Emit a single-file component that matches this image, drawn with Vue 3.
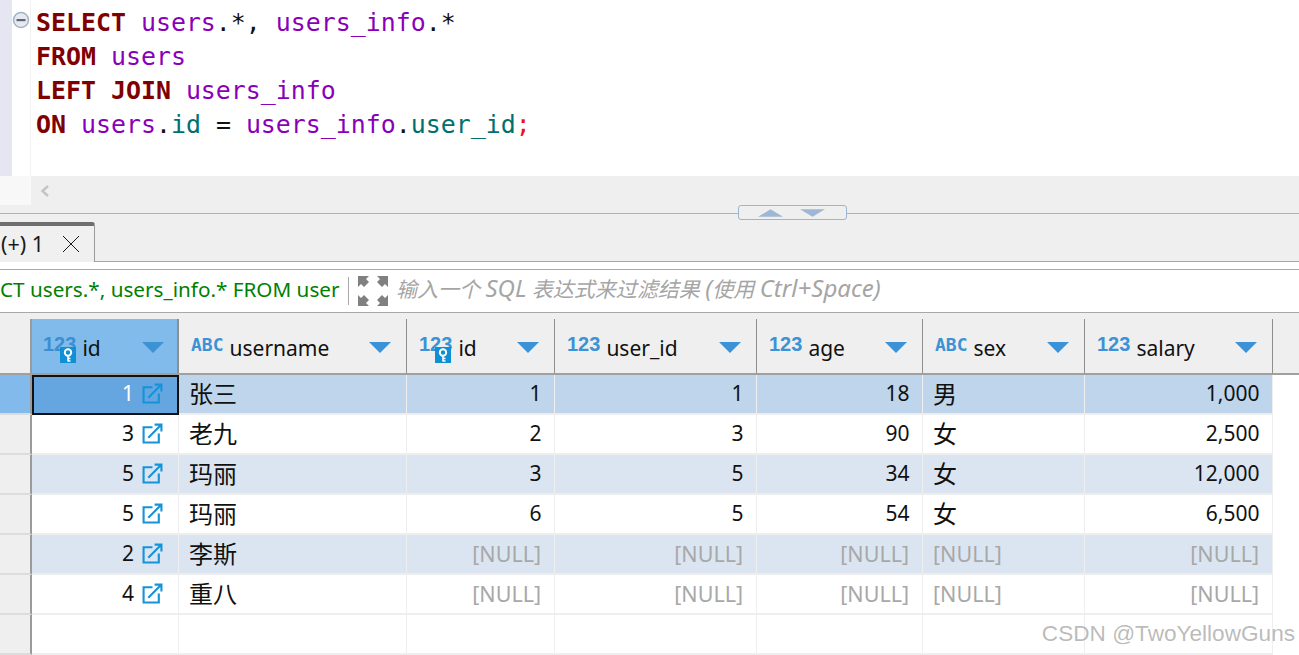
<script setup>
const columns = [
  { name: 'id', type: '123', key: true, width: 147, active: true },
  { name: 'username', type: 'ABC', width: 228 },
  { name: 'id', type: '123', key: true, width: 148 },
  { name: 'user_id', type: '123', width: 202 },
  { name: 'age', type: '123', width: 166 },
  { name: 'sex', type: 'ABC', width: 162 },
  { name: 'salary', type: '123', width: 188 }
]
const N = '[NULL]'
const rows = [
  ['1', '张三', '1', '1', '18', '男', '1,000'],
  ['3', '老九', '2', '3', '90', '女', '2,500'],
  ['5', '玛丽', '3', '5', '34', '女', '12,000'],
  ['5', '玛丽', '6', '5', '54', '女', '6,500'],
  ['2', '李斯', N, N, N, N, N],
  ['4', '重八', N, N, N, N, N]
]
const isText = (i) => columns[i].type === 'ABC'
const rowClass = (r) => (r === 0 ? 'sel' : r % 2 === 0 ? 'alt' : '')
</script>

<template>
  <div class="page">
    <section class="editor">
      <div class="gutter"></div>
      <div class="fold">
        <svg class="fold-icon" width="18" height="18" viewBox="0 0 18 18">
          <circle cx="9" cy="9" r="7.5" fill="#e6eaf0" stroke="#a3b3c6" stroke-width="1.5" />
          <rect x="4.5" y="8" width="9" height="2.2" fill="#5f6670" />
        </svg>
      </div>
      <pre class="code"><span class="kw">SELECT</span> <span class="tb">users</span>.*, <span class="tb">users_info</span>.*
<span class="kw">FROM</span> <span class="tb">users</span>
<span class="kw">LEFT JOIN</span> <span class="tb">users_info</span>
<span class="kw">ON</span> <span class="tb">users</span>.<span class="cl">id</span> = <span class="tb">users_info</span>.<span class="cl">user_id</span><span class="sc">;</span></pre>
    </section>

    <div class="hscroll">
      <div class="hscroll-corner"></div>
      <svg class="chev" width="10" height="12" viewBox="0 0 10 12"><path d="M8 1 2.5 6 8 11" fill="none" stroke="#c4c4c4" stroke-width="2.4" /></svg>
    </div>

    <div class="sash">
      <div class="sash-handle">
        <svg width="25" height="8" viewBox="0 0 26 8"><path d="M0 8 13 0 26 8Z" fill="#9db7d4" /></svg>
        <svg width="25" height="8" viewBox="0 0 26 8"><path d="M0 0H26L13 8Z" fill="#9db7d4" /></svg>
      </div>
    </div>

    <div class="tabbar">
      <div class="tab">
        <span class="tab-label">(+) 1</span>
        <svg width="18" height="18" viewBox="0 0 18 18"><path d="M1 1 17 17M17 1 1 17" stroke="#1a1a1a" stroke-width="1" fill="none" /></svg>
      </div>
    </div>

    <div class="filter">
      <div class="query"><span class="query-text">CT users.*, users_info.* FROM users</span></div>
      <div class="divider"></div>
      <svg class="expand" width="30" height="30" viewBox="0 0 30 30" fill="#808080">
        <path d="M0 0H11L8 3 11 6 6 11 3 8 0 11Z" />
        <path d="M30 0H19L22 3 19 6 24 11 27 8 30 11Z" />
        <path d="M0 30H11L8 27 11 24 6 19 3 22 0 19Z" />
        <path d="M30 30H19L22 27 19 24 24 19 27 22 30 19Z" />
      </svg>
      <span class="hint">输入一个 <span class="latin">SQL</span> 表达式来过滤结果 <span class="latin">(</span>使用 <span class="latin">Ctrl+Space)</span></span>
    </div>

    <div class="gap"></div>

    <div class="grid">
      <div class="head-row">
        <div class="row-head"></div>
        <div
          v-for="(c, i) in columns"
          :key="i"
          class="hcell"
          :class="{ active: c.active }"
          :style="{ width: c.width + 'px' }"
        >
          <span class="type" :class="{ abc: c.type === 'ABC' }">{{ c.type }}</span>
          <svg v-if="c.key" class="key" width="16" height="16" viewBox="0 0 16 16">
            <rect width="16" height="16" fill="#0f8fd6" />
            <circle cx="8" cy="5.500" r="3.200" fill="none" stroke="#fff" stroke-width="2" />
            <path d="M8 8.500V14.500M8 11.500H10.500M8 14H10.500" stroke="#fff" stroke-width="1.600" fill="none" />
          </svg>
          <span class="hname">{{ c.name }}</span>
          <svg class="sort" width="22" height="11" viewBox="0 0 22 11"><path d="M0 0H22L11 11Z" :fill="c.active ? '#3c92d2' : '#3c92d6'" /></svg>
        </div>
      </div>

      <div v-for="(row, r) in rows" :key="r" class="row" :class="rowClass(r)">
        <div class="row-head"></div>
        <div
          v-for="(v, i) in row"
          :key="i"
          class="cell"
          :class="{ left: isText(i), null: v === N, current: r === 0 && i === 0, first: i === 0 }"
          :style="{ width: columns[i].width + 'px' }"
        >
          <span>{{ v }}</span>
          <svg v-if="i === 0" class="link" width="21" height="21" viewBox="0 0 20 20" fill="none" stroke="#1593d8" stroke-width="2">
            <path d="M10 4H1.500V18.500H16V10" />
            <path d="M6 14 18 2M12 1.500H18.500V8" />
          </svg>
        </div>
      </div>

      <div class="row last">
        <div class="row-head"></div>
        <div v-for="(c, i) in columns" :key="i" class="cell" :style="{ width: c.width + 'px' }"></div>
      </div>
    </div>

    <div class="watermark">CSDN @TwoYellowGuns</div>
  </div>
</template>

<style scoped>
.page {
  position: relative;
  width: 1299px;
  height: 655px;
  overflow: hidden;
  background: #fff;
  font-family: "Noto Sans", "Noto Sans CJK SC", sans-serif;
  color: #111;
}
.editor {
  display: flex;
  height: 176px;
}
.gutter {
  width: 12px;
  background: #e6e6f2;
}
.fold {
  width: 18px;
  border-right: 1px solid #f2f2f2;
  padding-top: 11px;
}
.fold-icon {
  display: block;
}
.code {
  margin: 6px 0 0 5px;
  font-family: "DejaVu Sans Mono", monospace;
  font-size: 24.9px;
  line-height: 34px;
  color: #111;
}
.kw { color: #7f0000; font-weight: 700; }
.tb { color: #8a00b8; }
.cl { color: #006f70; }
.sc { color: #f01010; }
.hscroll {
  display: flex;
  align-items: center;
  height: 29px;
  background: #efefef;
}
.hscroll-corner {
  width: 31px;
  height: 29px;
  background: #f8f8f8;
}
.chev { margin-left: 9px; }
.sash {
  display: flex;
  height: 17px;
  background: linear-gradient(#efefef 8px, #9db5d0 8px, #9db5d0 9px, #efefef 9px);
}
.sash-handle {
  box-sizing: border-box;
  display: flex;
  align-items: center;
  gap: 17px;
  width: 109px;
  height: 15px;
  margin-left: 738px;
  padding-left: 19px;
  background: #efefef;
  border: 1px solid #9db5d0;
  border-radius: 3px;
}
.tabbar {
  display: flex;
  align-items: flex-end;
  height: 40px;
  box-sizing: border-box;
  background: #efefef;
  border-bottom: 1px solid #a8a8a8;
}
.tab {
  display: flex;
  align-items: center;
  gap: 18px;
  box-sizing: border-box;
  width: 95px;
  height: 40px;
  margin-bottom: -1px;
  border-top: 4px solid #6e6e6e;
  border-right: 1px solid #9a9a9a;
  border-top-right-radius: 3px;
  background: #f0f0f0;
  padding-left: 1px;
}
.tab-label {
  font-size: 21.5px;
  line-height: 30px;
  white-space: nowrap;
  color: #1a1a1a;
}
.filter {
  display: flex;
  align-items: center;
  height: 44px;
  margin-top: 7px;
  box-sizing: border-box;
  background: #fff;
  border-top: 1px solid #a8a8a8;
  border-bottom: 1px solid #a8a8a8;
}
.query {
  width: 340px;
  overflow: hidden;
  white-space: nowrap;
  margin-top: -4px;
}
.query-text {
  font-size: 20.7px;
  color: #008000;
  display: inline-block;
}
.divider {
  width: 1px;
  height: 28px;
  margin-left: 8px;
  background: #a8a8a8;
}
.expand {
  margin-left: 9px;
  margin-top: -1px;
}
.hint {
  margin-left: 8px;
  margin-top: -8px;
  font-size: 21px;
  font-style: italic;
  color: #a5a5a5;
  white-space: nowrap;
}
.latin { font-size: 24px; }
.gap {
  height: 6px;
  background: #efefef;
}
.head-row {
  display: flex;
  height: 56px;
  box-sizing: border-box;
  background: #efefef;
  border-bottom: 2px solid #a0a0a0;
}
.row-head {
  width: 32px;
  box-sizing: border-box;
  flex: none;
  background: #efefef;
  border-right: 2px solid #9a9a9a;
  border-bottom: 2px solid #dcdcdc;
}
.head-row .row-head {
  border-bottom: 0;
}
.hcell {
  position: relative;
  display: flex;
  align-items: center;
  box-sizing: border-box;
  flex: none;
  padding: 4px 12px 0;
  border-right: 1px solid #8e8e8e;
  font-size: 21px;
}
.hcell.active {
  background: #80bbec;
  border-right-width: 2px;
  padding-left: 11px;
}
.type {
  margin-right: 6px;
  font-family: "Liberation Sans", sans-serif;
  font-size: 20px;
  font-weight: 700;
  color: #3c92d6;
  margin-top: -7px;
}
.type.abc {
  font-family: "DejaVu Sans Mono", monospace;
  font-size: 18px;
}
.active .type {
  color: #3c8ed2;
}
.key {
  position: absolute;
  left: 28px;
  top: 28px;
}
.hname {
  white-space: nowrap;
}
.sort {
  position: absolute;
  right: 15px;
  top: 23px;
}
.active .sort { right: 13px; }
.row {
  display: flex;
  height: 40px;
  box-sizing: border-box;
  background: #fff;
}
.row.sel .cell { background: #bed5ec; }
.row.alt .cell { background: #dbe5f1; }
.row.sel .row-head { background: #82bbeb; }
.row.sel .cell.current { background: #66a6e0; }
.cell {
  display: flex;
  align-items: center;
  justify-content: flex-end;
  gap: 8px;
  box-sizing: border-box;
  flex: none;
  padding: 0 12.5px 2px;
  font-size: 21px;
  border-right: 1px solid #eeeeee;
  border-bottom: 2px solid #eeeeee;
  white-space: nowrap;
}
.cell.first { padding-right: 15px; }
.cell.left {
  justify-content: flex-start;
  padding-left: 10px;
  padding-bottom: 3px;
  font-size: 24px;
}
.cell.null {
  color: #a8a8a8;
  font-size: 21.5px;
  padding-bottom: 1px;
  padding-right: 13px;
}
.cell.current {
  color: #fff;
  outline: 2px solid #111;
  outline-offset: -2px;
  border-color: transparent;
}
.last .cell { background: #fff; }
.watermark {
  position: absolute;
  right: 4px;
  top: 621px;
  font-family: "Liberation Sans", sans-serif;
  font-size: 22.6px;
  color: rgba(120, 120, 120, 0.5);
  white-space: nowrap;
}
</style>
